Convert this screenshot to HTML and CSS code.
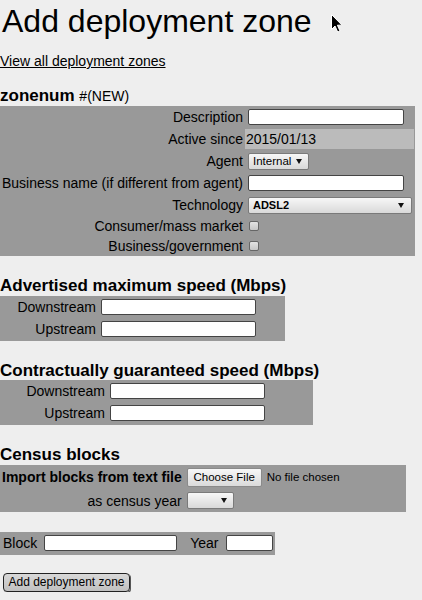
FILE: index.html
```html
<!DOCTYPE html>
<html lang="en">
<head>
<meta charset="utf-8">
<title>Add deployment zone</title>
<link rel="stylesheet" href="styles.css">
</head>
<body>
<h1 class="title">Add deployment zone</h1>
<p class="nav"><a href="#">View all deployment zones</a></p>

<h2 class="sec-head first">zonenum <span class="sub">#(NEW)</span></h2>
<div class="form-grid main">
  <label class="lab">Description</label>
  <div class="val"><input class="txt w156" type="text"></div>

  <div class="lab">Active since</div>
  <div class="val light">2015/01/13</div>

  <label class="lab">Agent</label>
  <div class="val"><span class="select agent">Internal<svg class="arrow" viewBox="0 0 6 5" width="6" height="5"><polygon points="0,0 6,0 3,5"/></svg></span></div>

  <label class="lab">Business name (if different from agent)</label>
  <div class="val"><input class="txt w156" type="text"></div>

  <label class="lab">Technology</label>
  <div class="val"><span class="select tech">ADSL2<svg class="arrow" viewBox="0 0 6 5" width="6" height="5"><polygon points="0,0 6,0 3,5"/></svg></span></div>

  <label class="lab short">Consumer/mass market</label>
  <div class="val short"><input class="chk" type="checkbox"></div>

  <label class="lab short">Business/government</label>
  <div class="val short"><input class="chk" type="checkbox"></div>
</div>

<h2 class="sec-head">Advertised maximum speed (Mbps)</h2>
<div class="form-grid speed adv">
  <label class="lab">Downstream</label>
  <div class="val"><input class="txt w155" type="text"></div>
  <label class="lab">Upstream</label>
  <div class="val"><input class="txt w155" type="text"></div>
</div>

<h2 class="sec-head">Contractually guaranteed speed (Mbps)</h2>
<div class="form-grid speed con">
  <label class="lab">Downstream</label>
  <div class="val"><input class="txt w155" type="text"></div>
  <label class="lab">Upstream</label>
  <div class="val"><input class="txt w155" type="text"></div>
</div>

<h2 class="sec-head">Census blocks</h2>
<div class="form-grid census">
  <label class="lab bold tall">Import blocks from text file</label>
  <div class="val tall"><span class="file-btn">Choose File</span><span class="file-name">No file chosen</span></div>
  <label class="lab">as census year</label>
  <div class="val"><span class="select year"><svg class="arrow" viewBox="0 0 6 5" width="6" height="5"><polygon points="0,0 6,0 3,5"/></svg></span></div>
</div>

<div class="block-row">
  <label class="blab">Block</label>
  <input class="txt w133" type="text">
  <label class="blab ylab">Year</label>
  <input class="txt w47" type="text">
</div>

<button class="submit" type="button">Add deployment zone</button>

<svg class="cursor" viewBox="0 0 12 19" width="12" height="19"><path d="M0.5 0.5 L0.5 15.5 L4 12 L6.7 18 L9 17 L6.4 11.2 L11 11.2 Z" fill="#000" stroke="#fff" stroke-width="1"/></svg>
</body>
</html>
```

FILE: styles.css
```css
body {
  margin: 0;
  background: #eeeeee;
  color: #000;
  font-family: "Liberation Sans", Arial, sans-serif;
  font-size: 14px;
  position: relative;
}

.title {
  margin: 3px 0 0 2px;
  font-size: 32px;
  font-weight: normal;
  line-height: 37px;
}

.nav {
  margin: 13px 0 0;
  line-height: 16px;
}

.nav a {
  color: #000;
}

.sec-head {
  margin: 20px 0 0;
  font-size: 17px;
  font-weight: bold;
  line-height: 19.5px;
}

.sec-head.first {
  margin-top: 17px;
  line-height: 19px;
}

.sub {
  font-size: 14px;
  font-weight: normal;
}

.form-grid {
  display: grid;
  background: #999999;
  padding: 1px;
  column-gap: 1px;
  row-gap: 2px;
}

.main {
  display: inline-grid;
  grid-template-columns: auto auto;
}

.lab {
  display: flex;
  align-items: center;
  justify-content: flex-end;
  min-height: 20px;
  padding: 0 1px;
  white-space: nowrap;
}

.val {
  display: flex;
  align-items: center;
  min-height: 20px;
  padding: 0 2px 0 1px;
  white-space: nowrap;
}

.lab.short,
.val.short {
  min-height: 18px;
}

.light {
  background: #bbbbbb;
}

.txt {
  box-sizing: border-box;
  height: 16px;
  margin: 0 0 0 2px;
  padding: 0 2px;
  border: 1px solid #444;
  border-radius: 2px;
  background: #fff;
  font: 12px "Liberation Sans", Arial, sans-serif;
}

.w156 { width: 156px; }
.w155 { width: 155px; }
.w133 { width: 133px; }
.w47 { width: 47px; }

.select {
  box-sizing: border-box;
  display: inline-flex;
  align-items: center;
  justify-content: space-between;
  height: 17px;
  margin-left: 2px;
  padding: 0 6px 0 4px;
  border: 1px solid #7a7a7a;
  border-radius: 2px;
  background: linear-gradient(#f7f7f7, #d9d9d9);
  font-size: 11.5px;
}

.agent { width: 61px; }
.tech { width: 164px; font-weight: bold; font-size: 11px; padding-right: 7px; }
.year { width: 47px; justify-content: flex-end; }

.arrow {
  fill: #111;
  flex: none;
}

.chk {
  appearance: none;
  -webkit-appearance: none;
  box-sizing: border-box;
  width: 10px;
  height: 10px;
  margin: 0 0 0 3px;
  border: 1px solid #666;
  border-radius: 2px;
  background: linear-gradient(#e2e2e2, #c6c6c6);
}

.speed {
  padding-bottom: 2px;
}

.adv {
  width: 285px;
  box-sizing: border-box;
  grid-template-columns: 96px 1fr;
}

.con {
  width: 313px;
  box-sizing: border-box;
  grid-template-columns: 105px 1fr;
}

.census {
  width: 406px;
  box-sizing: border-box;
  grid-template-columns: auto 1fr;
}

.bold {
  font-weight: bold;
}

.tall {
  min-height: 23px;
}

.file-btn {
  box-sizing: border-box;
  display: inline-flex;
  align-items: center;
  justify-content: center;
  width: 75px;
  height: 19px;
  margin-left: 2px;
  border: 1px solid #8a8a8a;
  border-radius: 2px;
  background: linear-gradient(#f7f7f7, #dadada);
  font-size: 11.5px;
}

.file-name {
  margin-left: 5px;
  font-size: 11.5px;
}

.block-row {
  display: inline-flex;
  align-items: center;
  margin-top: 20px;
  min-height: 21px;
  padding: 1px 2px 1px 3px;
  background: #999999;
}

.block-row .txt {
  margin-left: 7px;
}

.ylab {
  margin-left: 13px;
}

.submit {
  display: block;
  box-sizing: border-box;
  width: 127px;
  height: 19px;
  margin: 18px 0 0 3px;
  padding: 0;
  border: 1px solid #222;
  border-radius: 4px;
  background: linear-gradient(#d8d8d8, #c0c0c0);
  box-shadow: 1px 1px 0 #555;
  color: #000;
  font: 12px "Liberation Sans", Arial, sans-serif;
}

.cursor {
  position: absolute;
  left: 331px;
  top: 14px;
}
```
